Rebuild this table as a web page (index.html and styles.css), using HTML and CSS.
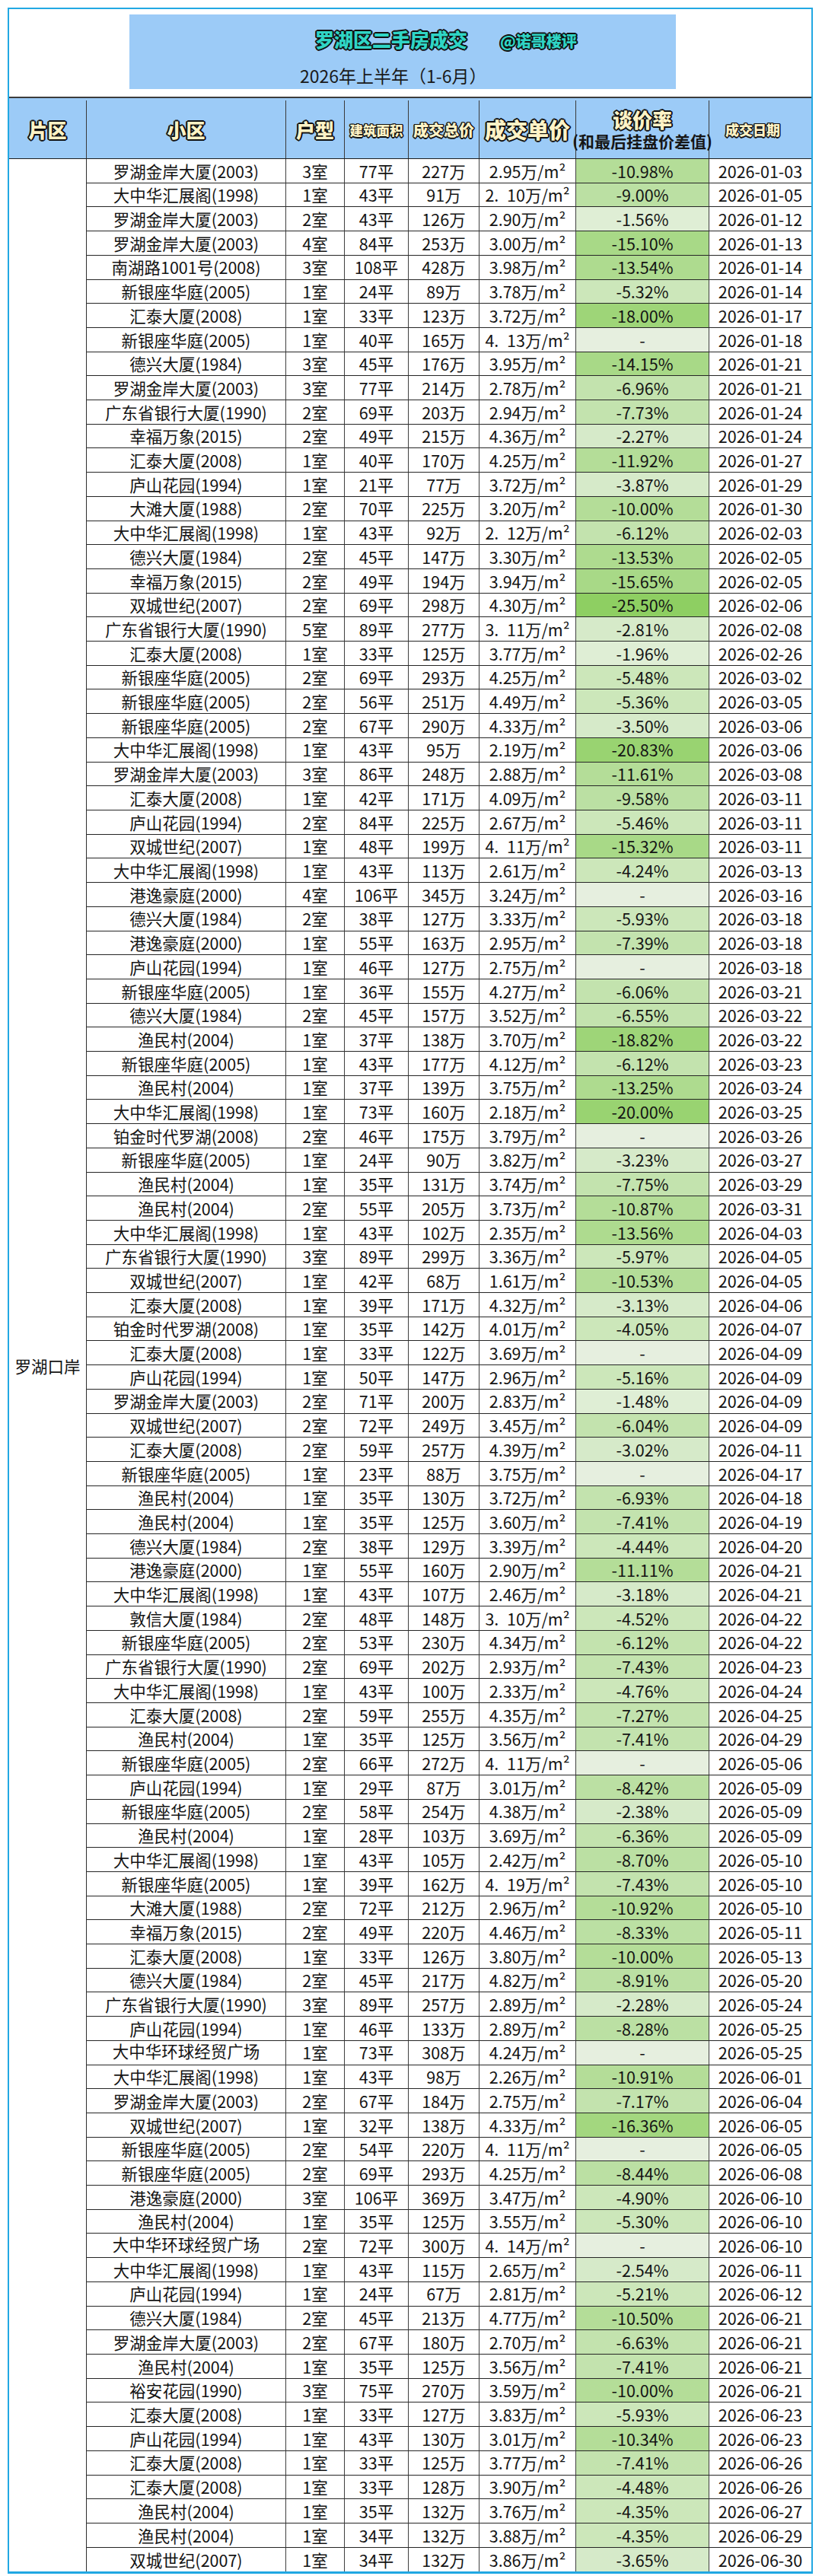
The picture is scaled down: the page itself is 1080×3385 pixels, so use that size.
FILE: index.html
```html
<!DOCTYPE html>
<html lang="zh-CN">
<head>
<meta charset="utf-8">
<title>罗湖区二手房成交</title>
<link rel="stylesheet" href="styles.css">
</head>
<body>
<div class="frame">
  <div class="top">
    <div class="titlebox">
      <div class="tline"><span class="ttl">罗湖区二手房成交</span><span class="handle">@诺哥楼评</span></div>
      <div class="sub">2026年上半年（1-6月）</div>
    </div>
  </div>
  <div class="head">
    <div class="h"><span class="lbl l25">片区</span></div>
    <div class="h"><span class="lbl l25">小区</span></div>
    <div class="h"><span class="lbl l25">户型</span></div>
    <div class="h"><span class="lbl l17">建筑面积</span></div>
    <div class="h"><span class="lbl l20">成交总价</span></div>
    <div class="h"><span class="lbl l28">成交单价</span></div>
    <div class="h stack"><span class="lbl l26">谈价率</span><span class="note">(和最后挂盘价差值)</span></div>
    <div class="h date"><span class="lbl l18">成交日期</span></div>
  </div>
  <div class="body">
    <div class="area">罗湖口岸</div>
    <div class="rows">
<div class="row"><span>罗湖金岸大厦(2003)</span><span>3室</span><span>77平</span><span>227万</span><span>2.95万/m²</span><span class="b5">-10.98%</span><span>2026-01-03</span></div>
<div class="row"><span>大中华汇展阁(1998)</span><span>1室</span><span>43平</span><span>91万</span><span>2.&ensp;10万/m²</span><span class="b4">-9.00%</span><span>2026-01-05</span></div>
<div class="row"><span>罗湖金岸大厦(2003)</span><span>2室</span><span>43平</span><span>126万</span><span>2.90万/m²</span><span class="b0">-1.56%</span><span>2026-01-12</span></div>
<div class="row"><span>罗湖金岸大厦(2003)</span><span>4室</span><span>84平</span><span>253万</span><span>3.00万/m²</span><span class="b7">-15.10%</span><span>2026-01-13</span></div>
<div class="row"><span>南湖路1001号(2008)</span><span>3室</span><span>108平</span><span>428万</span><span>3.98万/m²</span><span class="b6">-13.54%</span><span>2026-01-14</span></div>
<div class="row"><span>新银座华庭(2005)</span><span>1室</span><span>24平</span><span>89万</span><span>3.78万/m²</span><span class="b2">-5.32%</span><span>2026-01-14</span></div>
<div class="row"><span>汇泰大厦(2008)</span><span>1室</span><span>33平</span><span>123万</span><span>3.72万/m²</span><span class="b9">-18.00%</span><span>2026-01-17</span></div>
<div class="row"><span>新银座华庭(2005)</span><span>1室</span><span>40平</span><span>165万</span><span>4.&ensp;13万/m²</span><span class="nd">-</span><span>2026-01-18</span></div>
<div class="row"><span>德兴大厦(1984)</span><span>3室</span><span>45平</span><span>176万</span><span>3.95万/m²</span><span class="b7">-14.15%</span><span>2026-01-21</span></div>
<div class="row"><span>罗湖金岸大厦(2003)</span><span>3室</span><span>77平</span><span>214万</span><span>2.78万/m²</span><span class="b3">-6.96%</span><span>2026-01-21</span></div>
<div class="row"><span>广东省银行大厦(1990)</span><span>2室</span><span>69平</span><span>203万</span><span>2.94万/m²</span><span class="b3">-7.73%</span><span>2026-01-24</span></div>
<div class="row"><span>幸福万象(2015)</span><span>2室</span><span>49平</span><span>215万</span><span>4.36万/m²</span><span class="b1">-2.27%</span><span>2026-01-24</span></div>
<div class="row"><span>汇泰大厦(2008)</span><span>1室</span><span>40平</span><span>170万</span><span>4.25万/m²</span><span class="b5">-11.92%</span><span>2026-01-27</span></div>
<div class="row"><span>庐山花园(1994)</span><span>1室</span><span>21平</span><span>77万</span><span>3.72万/m²</span><span class="b1">-3.87%</span><span>2026-01-29</span></div>
<div class="row"><span>大滩大厦(1988)</span><span>2室</span><span>70平</span><span>225万</span><span>3.20万/m²</span><span class="b5">-10.00%</span><span>2026-01-30</span></div>
<div class="row"><span>大中华汇展阁(1998)</span><span>1室</span><span>43平</span><span>92万</span><span>2.&ensp;12万/m²</span><span class="b3">-6.12%</span><span>2026-02-03</span></div>
<div class="row"><span>德兴大厦(1984)</span><span>2室</span><span>45平</span><span>147万</span><span>3.30万/m²</span><span class="b6">-13.53%</span><span>2026-02-05</span></div>
<div class="row"><span>幸福万象(2015)</span><span>2室</span><span>49平</span><span>194万</span><span>3.94万/m²</span><span class="b7">-15.65%</span><span>2026-02-05</span></div>
<div class="row"><span>双城世纪(2007)</span><span>2室</span><span>69平</span><span>298万</span><span>4.30万/m²</span><span class="b12">-25.50%</span><span>2026-02-06</span></div>
<div class="row"><span>广东省银行大厦(1990)</span><span>5室</span><span>89平</span><span>277万</span><span>3.&ensp;11万/m²</span><span class="b1">-2.81%</span><span>2026-02-08</span></div>
<div class="row"><span>汇泰大厦(2008)</span><span>1室</span><span>33平</span><span>125万</span><span>3.77万/m²</span><span class="b0">-1.96%</span><span>2026-02-26</span></div>
<div class="row"><span>新银座华庭(2005)</span><span>2室</span><span>69平</span><span>293万</span><span>4.25万/m²</span><span class="b2">-5.48%</span><span>2026-03-02</span></div>
<div class="row"><span>新银座华庭(2005)</span><span>2室</span><span>56平</span><span>251万</span><span>4.49万/m²</span><span class="b2">-5.36%</span><span>2026-03-05</span></div>
<div class="row"><span>新银座华庭(2005)</span><span>2室</span><span>67平</span><span>290万</span><span>4.33万/m²</span><span class="b1">-3.50%</span><span>2026-03-06</span></div>
<div class="row"><span>大中华汇展阁(1998)</span><span>1室</span><span>43平</span><span>95万</span><span>2.19万/m²</span><span class="b10">-20.83%</span><span>2026-03-06</span></div>
<div class="row"><span>罗湖金岸大厦(2003)</span><span>3室</span><span>86平</span><span>248万</span><span>2.88万/m²</span><span class="b5">-11.61%</span><span>2026-03-08</span></div>
<div class="row"><span>汇泰大厦(2008)</span><span>1室</span><span>42平</span><span>171万</span><span>4.09万/m²</span><span class="b4">-9.58%</span><span>2026-03-11</span></div>
<div class="row"><span>庐山花园(1994)</span><span>2室</span><span>84平</span><span>225万</span><span>2.67万/m²</span><span class="b2">-5.46%</span><span>2026-03-11</span></div>
<div class="row"><span>双城世纪(2007)</span><span>1室</span><span>48平</span><span>199万</span><span>4.&ensp;11万/m²</span><span class="b7">-15.32%</span><span>2026-03-11</span></div>
<div class="row"><span>大中华汇展阁(1998)</span><span>1室</span><span>43平</span><span>113万</span><span>2.61万/m²</span><span class="b2">-4.24%</span><span>2026-03-13</span></div>
<div class="row"><span>港逸豪庭(2000)</span><span>4室</span><span>106平</span><span>345万</span><span>3.24万/m²</span><span class="nd">-</span><span>2026-03-16</span></div>
<div class="row"><span>德兴大厦(1984)</span><span>2室</span><span>38平</span><span>127万</span><span>3.33万/m²</span><span class="b2">-5.93%</span><span>2026-03-18</span></div>
<div class="row"><span>港逸豪庭(2000)</span><span>1室</span><span>55平</span><span>163万</span><span>2.95万/m²</span><span class="b3">-7.39%</span><span>2026-03-18</span></div>
<div class="row"><span>庐山花园(1994)</span><span>1室</span><span>46平</span><span>127万</span><span>2.75万/m²</span><span class="nd">-</span><span>2026-03-18</span></div>
<div class="row"><span>新银座华庭(2005)</span><span>1室</span><span>36平</span><span>155万</span><span>4.27万/m²</span><span class="b3">-6.06%</span><span>2026-03-21</span></div>
<div class="row"><span>德兴大厦(1984)</span><span>2室</span><span>45平</span><span>157万</span><span>3.52万/m²</span><span class="b3">-6.55%</span><span>2026-03-22</span></div>
<div class="row"><span>渔民村(2004)</span><span>1室</span><span>37平</span><span>138万</span><span>3.70万/m²</span><span class="b9">-18.82%</span><span>2026-03-22</span></div>
<div class="row"><span>新银座华庭(2005)</span><span>1室</span><span>43平</span><span>177万</span><span>4.12万/m²</span><span class="b3">-6.12%</span><span>2026-03-23</span></div>
<div class="row"><span>渔民村(2004)</span><span>1室</span><span>37平</span><span>139万</span><span>3.75万/m²</span><span class="b6">-13.25%</span><span>2026-03-24</span></div>
<div class="row"><span>大中华汇展阁(1998)</span><span>1室</span><span>73平</span><span>160万</span><span>2.18万/m²</span><span class="b10">-20.00%</span><span>2026-03-25</span></div>
<div class="row"><span>铂金时代罗湖(2008)</span><span>2室</span><span>46平</span><span>175万</span><span>3.79万/m²</span><span class="nd">-</span><span>2026-03-26</span></div>
<div class="row"><span>新银座华庭(2005)</span><span>1室</span><span>24平</span><span>90万</span><span>3.82万/m²</span><span class="b1">-3.23%</span><span>2026-03-27</span></div>
<div class="row"><span>渔民村(2004)</span><span>1室</span><span>35平</span><span>131万</span><span>3.74万/m²</span><span class="b3">-7.75%</span><span>2026-03-29</span></div>
<div class="row"><span>渔民村(2004)</span><span>2室</span><span>55平</span><span>205万</span><span>3.73万/m²</span><span class="b5">-10.87%</span><span>2026-03-31</span></div>
<div class="row"><span>大中华汇展阁(1998)</span><span>1室</span><span>43平</span><span>102万</span><span>2.35万/m²</span><span class="b6">-13.56%</span><span>2026-04-03</span></div>
<div class="row"><span>广东省银行大厦(1990)</span><span>3室</span><span>89平</span><span>299万</span><span>3.36万/m²</span><span class="b2">-5.97%</span><span>2026-04-05</span></div>
<div class="row"><span>双城世纪(2007)</span><span>1室</span><span>42平</span><span>68万</span><span>1.61万/m²</span><span class="b5">-10.53%</span><span>2026-04-05</span></div>
<div class="row"><span>汇泰大厦(2008)</span><span>1室</span><span>39平</span><span>171万</span><span>4.32万/m²</span><span class="b1">-3.13%</span><span>2026-04-06</span></div>
<div class="row"><span>铂金时代罗湖(2008)</span><span>1室</span><span>35平</span><span>142万</span><span>4.01万/m²</span><span class="b2">-4.05%</span><span>2026-04-07</span></div>
<div class="row"><span>汇泰大厦(2008)</span><span>1室</span><span>33平</span><span>122万</span><span>3.69万/m²</span><span class="nd">-</span><span>2026-04-09</span></div>
<div class="row"><span>庐山花园(1994)</span><span>1室</span><span>50平</span><span>147万</span><span>2.96万/m²</span><span class="b2">-5.16%</span><span>2026-04-09</span></div>
<div class="row"><span>罗湖金岸大厦(2003)</span><span>2室</span><span>71平</span><span>200万</span><span>2.83万/m²</span><span class="b0">-1.48%</span><span>2026-04-09</span></div>
<div class="row"><span>双城世纪(2007)</span><span>2室</span><span>72平</span><span>249万</span><span>3.45万/m²</span><span class="b3">-6.04%</span><span>2026-04-09</span></div>
<div class="row"><span>汇泰大厦(2008)</span><span>2室</span><span>59平</span><span>257万</span><span>4.39万/m²</span><span class="b1">-3.02%</span><span>2026-04-11</span></div>
<div class="row"><span>新银座华庭(2005)</span><span>1室</span><span>23平</span><span>88万</span><span>3.75万/m²</span><span class="nd">-</span><span>2026-04-17</span></div>
<div class="row"><span>渔民村(2004)</span><span>1室</span><span>35平</span><span>130万</span><span>3.72万/m²</span><span class="b3">-6.93%</span><span>2026-04-18</span></div>
<div class="row"><span>渔民村(2004)</span><span>1室</span><span>35平</span><span>125万</span><span>3.60万/m²</span><span class="b3">-7.41%</span><span>2026-04-19</span></div>
<div class="row"><span>德兴大厦(1984)</span><span>2室</span><span>38平</span><span>129万</span><span>3.39万/m²</span><span class="b2">-4.44%</span><span>2026-04-20</span></div>
<div class="row"><span>港逸豪庭(2000)</span><span>1室</span><span>55平</span><span>160万</span><span>2.90万/m²</span><span class="b5">-11.11%</span><span>2026-04-21</span></div>
<div class="row"><span>大中华汇展阁(1998)</span><span>1室</span><span>43平</span><span>107万</span><span>2.46万/m²</span><span class="b1">-3.18%</span><span>2026-04-21</span></div>
<div class="row"><span>敦信大厦(1984)</span><span>2室</span><span>48平</span><span>148万</span><span>3.&ensp;10万/m²</span><span class="b2">-4.52%</span><span>2026-04-22</span></div>
<div class="row"><span>新银座华庭(2005)</span><span>2室</span><span>53平</span><span>230万</span><span>4.34万/m²</span><span class="b3">-6.12%</span><span>2026-04-22</span></div>
<div class="row"><span>广东省银行大厦(1990)</span><span>2室</span><span>69平</span><span>202万</span><span>2.93万/m²</span><span class="b3">-7.43%</span><span>2026-04-23</span></div>
<div class="row"><span>大中华汇展阁(1998)</span><span>1室</span><span>43平</span><span>100万</span><span>2.33万/m²</span><span class="b2">-4.76%</span><span>2026-04-24</span></div>
<div class="row"><span>汇泰大厦(2008)</span><span>2室</span><span>59平</span><span>255万</span><span>4.35万/m²</span><span class="b3">-7.27%</span><span>2026-04-25</span></div>
<div class="row"><span>渔民村(2004)</span><span>1室</span><span>35平</span><span>125万</span><span>3.56万/m²</span><span class="b3">-7.41%</span><span>2026-04-29</span></div>
<div class="row"><span>新银座华庭(2005)</span><span>2室</span><span>66平</span><span>272万</span><span>4.&ensp;11万/m²</span><span class="nd">-</span><span>2026-05-06</span></div>
<div class="row"><span>庐山花园(1994)</span><span>1室</span><span>29平</span><span>87万</span><span>3.01万/m²</span><span class="b4">-8.42%</span><span>2026-05-09</span></div>
<div class="row"><span>新银座华庭(2005)</span><span>2室</span><span>58平</span><span>254万</span><span>4.38万/m²</span><span class="b1">-2.38%</span><span>2026-05-09</span></div>
<div class="row"><span>渔民村(2004)</span><span>1室</span><span>28平</span><span>103万</span><span>3.69万/m²</span><span class="b3">-6.36%</span><span>2026-05-09</span></div>
<div class="row"><span>大中华汇展阁(1998)</span><span>1室</span><span>43平</span><span>105万</span><span>2.42万/m²</span><span class="b4">-8.70%</span><span>2026-05-10</span></div>
<div class="row"><span>新银座华庭(2005)</span><span>1室</span><span>39平</span><span>162万</span><span>4.&ensp;19万/m²</span><span class="b3">-7.43%</span><span>2026-05-10</span></div>
<div class="row"><span>大滩大厦(1988)</span><span>2室</span><span>72平</span><span>212万</span><span>2.96万/m²</span><span class="b5">-10.92%</span><span>2026-05-10</span></div>
<div class="row"><span>幸福万象(2015)</span><span>2室</span><span>49平</span><span>220万</span><span>4.46万/m²</span><span class="b4">-8.33%</span><span>2026-05-11</span></div>
<div class="row"><span>汇泰大厦(2008)</span><span>1室</span><span>33平</span><span>126万</span><span>3.80万/m²</span><span class="b5">-10.00%</span><span>2026-05-13</span></div>
<div class="row"><span>德兴大厦(1984)</span><span>2室</span><span>45平</span><span>217万</span><span>4.82万/m²</span><span class="b4">-8.91%</span><span>2026-05-20</span></div>
<div class="row"><span>广东省银行大厦(1990)</span><span>3室</span><span>89平</span><span>257万</span><span>2.89万/m²</span><span class="b1">-2.28%</span><span>2026-05-24</span></div>
<div class="row"><span>庐山花园(1994)</span><span>1室</span><span>46平</span><span>133万</span><span>2.89万/m²</span><span class="b4">-8.28%</span><span>2026-05-25</span></div>
<div class="row"><span class="up">大中华环球经贸广场</span><span>1室</span><span>73平</span><span>308万</span><span>4.24万/m²</span><span class="nd">-</span><span>2026-05-25</span></div>
<div class="row"><span>大中华汇展阁(1998)</span><span>1室</span><span>43平</span><span>98万</span><span>2.26万/m²</span><span class="b5">-10.91%</span><span>2026-06-01</span></div>
<div class="row"><span>罗湖金岸大厦(2003)</span><span>2室</span><span>67平</span><span>184万</span><span>2.75万/m²</span><span class="b3">-7.17%</span><span>2026-06-04</span></div>
<div class="row"><span>双城世纪(2007)</span><span>1室</span><span>32平</span><span>138万</span><span>4.33万/m²</span><span class="b8">-16.36%</span><span>2026-06-05</span></div>
<div class="row"><span>新银座华庭(2005)</span><span>2室</span><span>54平</span><span>220万</span><span>4.&ensp;11万/m²</span><span class="nd">-</span><span>2026-06-05</span></div>
<div class="row"><span>新银座华庭(2005)</span><span>2室</span><span>69平</span><span>293万</span><span>4.25万/m²</span><span class="b4">-8.44%</span><span>2026-06-08</span></div>
<div class="row"><span>港逸豪庭(2000)</span><span>3室</span><span>106平</span><span>369万</span><span>3.47万/m²</span><span class="b2">-4.90%</span><span>2026-06-10</span></div>
<div class="row"><span>渔民村(2004)</span><span>1室</span><span>35平</span><span>125万</span><span>3.55万/m²</span><span class="b2">-5.30%</span><span>2026-06-10</span></div>
<div class="row"><span class="up">大中华环球经贸广场</span><span>2室</span><span>72平</span><span>300万</span><span>4.&ensp;14万/m²</span><span class="nd">-</span><span>2026-06-10</span></div>
<div class="row"><span>大中华汇展阁(1998)</span><span>1室</span><span>43平</span><span>115万</span><span>2.65万/m²</span><span class="b1">-2.54%</span><span>2026-06-11</span></div>
<div class="row"><span>庐山花园(1994)</span><span>1室</span><span>24平</span><span>67万</span><span>2.81万/m²</span><span class="b2">-5.21%</span><span>2026-06-12</span></div>
<div class="row"><span>德兴大厦(1984)</span><span>2室</span><span>45平</span><span>213万</span><span>4.77万/m²</span><span class="b5">-10.50%</span><span>2026-06-21</span></div>
<div class="row"><span>罗湖金岸大厦(2003)</span><span>2室</span><span>67平</span><span>180万</span><span>2.70万/m²</span><span class="b3">-6.63%</span><span>2026-06-21</span></div>
<div class="row"><span>渔民村(2004)</span><span>1室</span><span>35平</span><span>125万</span><span>3.56万/m²</span><span class="b3">-7.41%</span><span>2026-06-21</span></div>
<div class="row"><span>裕安花园(1990)</span><span>3室</span><span>75平</span><span>270万</span><span>3.59万/m²</span><span class="b5">-10.00%</span><span>2026-06-21</span></div>
<div class="row"><span>汇泰大厦(2008)</span><span>1室</span><span>33平</span><span>127万</span><span>3.83万/m²</span><span class="b2">-5.93%</span><span>2026-06-23</span></div>
<div class="row"><span>庐山花园(1994)</span><span>1室</span><span>43平</span><span>130万</span><span>3.01万/m²</span><span class="b5">-10.34%</span><span>2026-06-23</span></div>
<div class="row"><span>汇泰大厦(2008)</span><span>1室</span><span>33平</span><span>125万</span><span>3.77万/m²</span><span class="b3">-7.41%</span><span>2026-06-26</span></div>
<div class="row"><span>汇泰大厦(2008)</span><span>1室</span><span>33平</span><span>128万</span><span>3.90万/m²</span><span class="b2">-4.48%</span><span>2026-06-26</span></div>
<div class="row"><span>渔民村(2004)</span><span>1室</span><span>35平</span><span>132万</span><span>3.76万/m²</span><span class="b2">-4.35%</span><span>2026-06-27</span></div>
<div class="row"><span>渔民村(2004)</span><span>1室</span><span>34平</span><span>132万</span><span>3.88万/m²</span><span class="b2">-4.35%</span><span>2026-06-29</span></div>
<div class="row"><span>双城世纪(2007)</span><span>1室</span><span>34平</span><span>132万</span><span>3.86万/m²</span><span class="b1">-3.65%</span><span>2026-06-30</span></div>
    </div>
  </div>
</div>
</body>
</html>
```
FILE: styles.css
```css
html, body {
  margin: 0;
  padding: 0;
  background: #ffffff;
}
body {
  font-family: "Noto Sans CJK SC", "Noto Sans", sans-serif;
  color: #141414;
}
.frame {
  margin: 10px 0 0 10px;
  width: 1058px;
  border: 2px solid #22a8e3;
  border-bottom-width: 3px;
  box-sizing: border-box;
}
.top {
  height: 108px;
}
.titlebox {
  margin: 7px 0 0 158px;
  width: 718px;
  height: 98px;
  background: #9ccbf7;
  display: flex;
  flex-direction: column;
}
.tline {
  display: flex;
  align-items: baseline;
  padding: 17px 0 0 244px;
  line-height: 30px;
  height: 30px;
}
.ttl, .handle, .lbl {
  font-weight: 900;
  text-shadow: 2px 0 0 #111, -2px 0 0 #111, 0 2px 0 #111, 0 -2px 0 #111,
    1.4px 1.4px 0 #111, -1.4px 1.4px 0 #111, 1.4px -1.4px 0 #111, -1.4px -1.4px 0 #111;
}
.ttl {
  font-size: 25px;
  color: #2fd5c5;
}
.handle {
  font-size: 20px;
  color: #2fd5c5;
  margin-left: 43px;
}
.sub {
  margin-top: 18px;
  padding-left: 224px;
  font-size: 23px;
  line-height: 30px;
  color: #1a1a1a;
}
.head {
  display: grid;
  grid-template-columns: 102px 262px 77px 84px 93px 127px 175px 134px;
  height: 82px;
  box-sizing: border-box;
  padding-top: 3px;
  border-top: 2px solid #3c3c3c;
  border-bottom: 1px solid #1e1e1e;
  background: #9ccbf7;
}
.h {
  display: flex;
  align-items: center;
  justify-content: center;
  border-right: 1px solid #3a3a3a;
  white-space: nowrap;
}
.h:last-child {
  border-right: 0;
}
.h.date {
  padding-right: 20px;
}
.h.stack {
  flex-direction: column;
}
.lbl {
  color: #fff3c6;
}
.l25 { font-size: 25px; }
.l28 { font-size: 28px; }
.l26 { font-size: 26px; line-height: 30px; }
.l20 { font-size: 20px; }
.l18 { font-size: 18px; }
.l17 { font-size: 17.5px; }
.l17, .l18, .l20 {
  text-shadow: 1.5px 0 0 #111, -1.5px 0 0 #111, 0 1.5px 0 #111, 0 -1.5px 0 #111,
    1px 1px 0 #111, -1px 1px 0 #111, 1px -1px 0 #111, -1px -1px 0 #111;
}
.note {
  font-size: 21px;
  font-weight: 700;
  line-height: 26px;
  color: #161616;
}
.body {
  display: flex;
}
.area {
  width: 102px;
  flex: none;
  box-sizing: border-box;
  border-right: 1px solid #2e2e2e;
  display: flex;
  align-items: center;
  justify-content: center;
  font-size: 21.5px;
}
.rows {
  flex: 1;
}
.row {
  display: grid;
  grid-template-columns: 262px 77px 84px 93px 127px 175px 134px;
  height: 31.71px;
}
.row span {
  display: flex;
  align-items: center;
  justify-content: center;
  box-sizing: border-box;
  border-right: 1px solid #404040;
  border-bottom: 1px solid #262626;
  font-size: 21.5px;
  line-height: 1;
  white-space: nowrap;
}
.row span:last-child {
  border-right: 0;
}
.row:last-child span {
  border-bottom: 0;
}
.row span.up {
  padding-bottom: 5px;
}
.nd  { background: #e6efdf; }
.b0  { background: #dfeed5; }
.b1  { background: #d6eac9; }
.b2  { background: #cce7ba; }
.b3  { background: #c3e3ae; }
.b4  { background: #bbe0a3; }
.b5  { background: #b4dd98; }
.b6  { background: #aedb8f; }
.b7  { background: #a8d987; }
.b8  { background: #a3d77f; }
.b9  { background: #9ed578; }
.b10 { background: #99d371; }
.b12 { background: #8ecf62; }
```
